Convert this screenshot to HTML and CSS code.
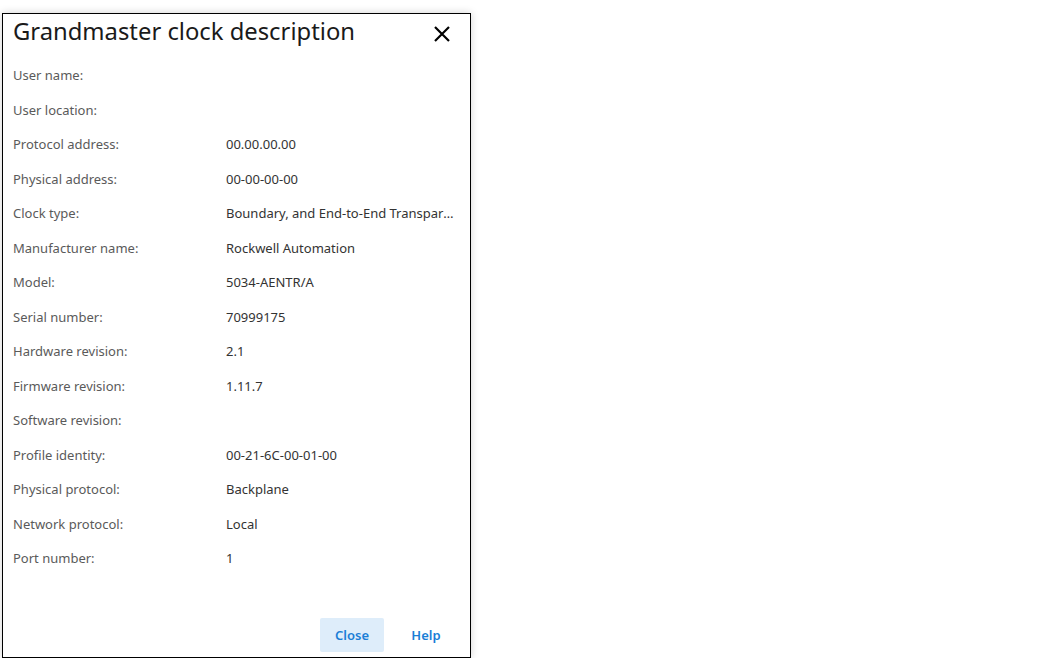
FILE: index.html
```
<!DOCTYPE html>
<html lang="en">
<head>
    <meta charset="UTF-8">
    <title>Grandmaster clock description</title>
    <link rel="stylesheet" href="styles.css">
</head>
<body>
    <div class="dialog">
        <div class="dialog-header">
            <h1>Grandmaster clock description</h1>
            <button class="close-x" title="Close">
                <svg width="18" height="18" viewBox="0 0 18 18"><path d="M2 2 L16 16 M16 2 L2 16" stroke="#000" stroke-width="2.2" fill="none"/></svg>
            </button>
        </div>

        <div class="details">
            <div class="label">User name:</div><div class="value"></div>
            <div class="label">User location:</div><div class="value"></div>
            <div class="label">Protocol address:</div><div class="value">00.00.00.00</div>
            <div class="label">Physical address:</div><div class="value">00-00-00-00</div>
            <div class="label">Clock type:</div><div class="value" title="Boundary, and End-to-End Transparent">Boundary, and End-to-End Transparent</div>
            <div class="label">Manufacturer name:</div><div class="value">Rockwell Automation</div>
            <div class="label">Model:</div><div class="value">5034-AENTR/A</div>
            <div class="label">Serial number:</div><div class="value">70999175</div>
            <div class="label">Hardware revision:</div><div class="value">2.1</div>
            <div class="label">Firmware revision:</div><div class="value">1.11.7</div>
            <div class="label">Software revision:</div><div class="value"></div>
            <div class="label">Profile identity:</div><div class="value">00-21-6C-00-01-00</div>
            <div class="label">Physical protocol:</div><div class="value">Backplane</div>
            <div class="label">Network protocol:</div><div class="value">Local</div>
            <div class="label">Port number:</div><div class="value">1</div>
        </div>

        <div class="dialog-footer">
            <button class="btn btn-primary">Close</button>
            <button class="btn">Help</button>
        </div>
    </div>
</body>
</html>
```

FILE: styles.css
```
body {
    margin: 0;
    background-color: #fff;
    font-family: "Noto Sans", "Open Sans", sans-serif;
    color: #333;
}
.dialog {
    margin: 13px 0 0 2px;
    width: 467px;
    height: 643px;
    border: 1px solid #000;
    background-color: #fff;
    box-shadow: 0 0 8px rgba(0, 0, 0, 0.18);
    display: flex;
    flex-direction: column;
}
.dialog-header {
    display: flex;
    align-items: flex-start;
    justify-content: space-between;
    box-sizing: border-box;
    height: 42px;
    padding: 1px 19px 0 10px;
}
.dialog-header h1 {
    margin: 0;
    font-size: 23.8px;
    line-height: 32px;
    font-weight: normal;
    color: #1a1a1a;
}
.close-x {
    border: none;
    background: none;
    padding: 0;
    display: flex;
    margin-top: 10px;
}
.details {
    flex: 1;
    display: grid;
    grid-template-columns: 213px 1fr;
    grid-auto-rows: 34.5px;
    padding: 2px 14px 0 10px;
    font-size: 13px;
    line-height: 34.5px;
}
.label {
    color: #5a5a5a;
}
.value {
    color: #333;
    white-space: nowrap;
    overflow: hidden;
    text-overflow: ellipsis;
}
.dialog-footer {
    display: flex;
    justify-content: flex-end;
    gap: 10px;
    padding: 0 12px 5px 0;
}
.btn {
    width: 64px;
    height: 34px;
    border: none;
    border-radius: 2px;
    background: none;
    color: #1b7ed6;
    font-family: inherit;
    font-size: 13px;
    font-weight: 600;
    cursor: pointer;
}
.btn-primary {
    background-color: #deedfa;
}
```
